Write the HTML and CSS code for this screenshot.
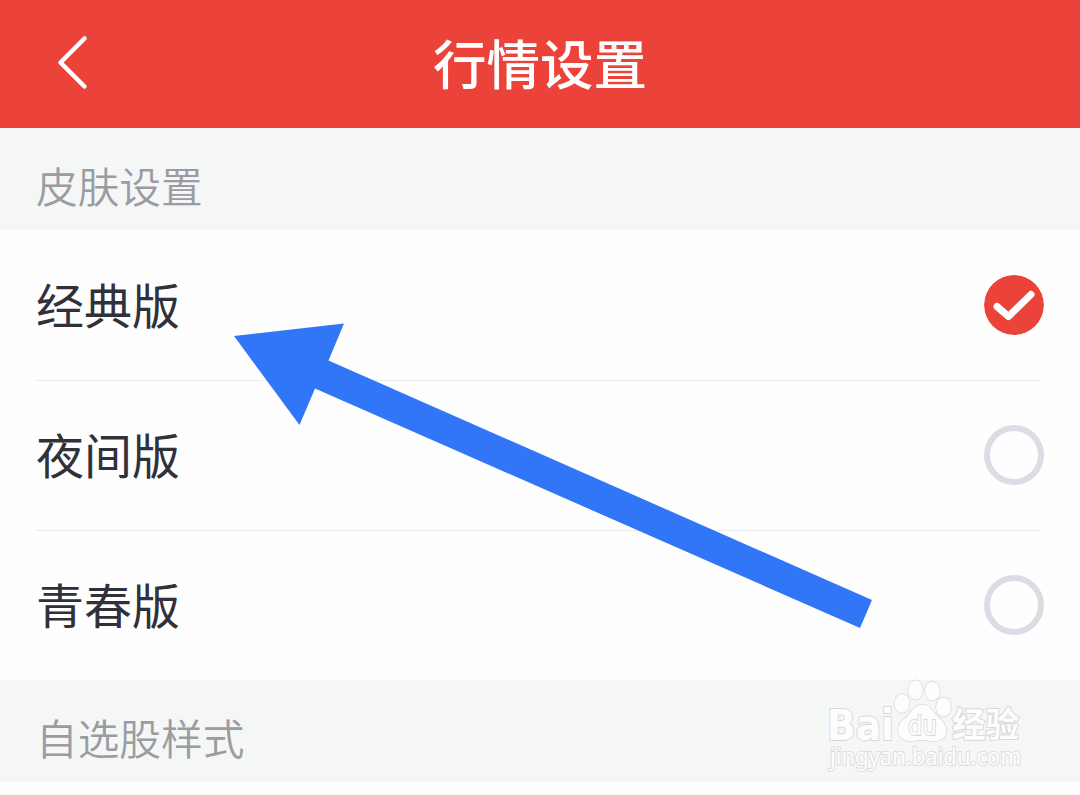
FILE: index.html
```html
<!DOCTYPE html>
<html lang="zh-CN">
<head>
  <meta charset="UTF-8">
  <meta name="viewport" content="width=device-width, initial-scale=1.0">
  <title>行情设置</title>
  <link rel="stylesheet" href="styles.css">
</head>
<body>

  <header class="navbar">
    <svg class="back" width="40" height="60" viewBox="0 0 40 60">
      <path d="M32.500 6.500 8.500 30.500 32.500 54.500"/>
    </svg>
    <h1>行情设置</h1>
  </header>

  <h2 class="section-title">皮肤设置</h2>
  <ul class="options">
    <li>
      <span>经典版</span>
      <svg class="radio checked" width="60" height="60" viewBox="0 0 60 60">
        <circle cx="30" cy="30" r="30"/>
        <path d="M13 31.500 24.500 41.500 47 19.500"/>
      </svg>
    </li>
    <li>
      <span>夜间版</span>
      <i class="radio"></i>
    </li>
    <li>
      <span>青春版</span>
      <i class="radio"></i>
    </li>
  </ul>
  <h2 class="section-title">自选股样式</h2>

  <!-- arrow pointing at the classic skin -->
  <svg class="arrow" width="640" height="306" viewBox="233 323 640 306">
    <polygon points="234,336 344,323.500 328.500,360.500 872,600 860,628 315,388.500 299.500,425"/>
  </svg>

  <svg class="watermark" width="210" height="100" viewBox="820 675 210 100">
    <text class="brand" x="827" y="740" textLength="67" lengthAdjust="spacingAndGlyphs">Bai</text>
    <g class="paw">
      <ellipse cx="902" cy="703.500" rx="7.500" ry="9.500"/>
      <ellipse cx="915.500" cy="690" rx="7.200" ry="9.800"/>
      <ellipse cx="932.500" cy="691" rx="7.500" ry="9.500"/>
      <ellipse cx="943.500" cy="707" rx="7.500" ry="9.500"/>
      <path d="M922 704.500C931 704.500 934 714 940 719C950 727 948 740 936 741C929 741.500 928 740 922 740C916 740 915 741.500 909 741C897 740 894 727 904 719C911 714 913 704.500 922 704.500Z"/>
    </g>
    <text class="du" x="908" y="735" textLength="29" lengthAdjust="spacingAndGlyphs">du</text>
    <text class="cn" x="952" y="737" textLength="67" lengthAdjust="spacingAndGlyphs">经验</text>
    <text class="url" x="830" y="765" textLength="191" lengthAdjust="spacingAndGlyphs">jingyan.baidu.com</text>
  </svg>

</body>
</html>
```

FILE: styles.css
```css
* {
  box-sizing: border-box;
  margin: 0;
  padding: 0;
}
body {
  font-family: "Noto Sans CJK SC", sans-serif;
  background: #fefefe;
  color: #303139;
  position: relative;
  height: 795px;
  overflow: hidden;
}
.navbar {
  display: grid;
  grid-template-columns: 100px 1fr 100px;
  align-items: center;
  height: 128px;
  padding-bottom: 4px;
  background: #eb433a;
  color: #fff;
}
.navbar h1 {
  grid-column: 2;
  font-size: 53.5px;
  font-weight: 500;
  line-height: 80px;
  text-align: center;
}
.back {
  margin-left: 52px;
}
.back path {
  fill: none;
  stroke: #fff;
  stroke-width: 4.5;
  stroke-linecap: round;
  stroke-linejoin: round;
}
.section-title {
  height: 102px;
  padding: 15px 36px 0;
  background: #f5f6f6;
  color: #9b9ca2;
  font-size: 41.7px;
  font-weight: 350;
  line-height: 84px;
}
.options {
  list-style: none;
  padding: 0 36px;
}
.options li {
  display: flex;
  align-items: center;
  justify-content: space-between;
  height: 150px;
  font-size: 48px;
  line-height: 70px;
}
.options li + li {
  background: linear-gradient(#ebebed, #ebebed) left top / 1004px 1px no-repeat;
}
.options span {
  padding-bottom: 5px;
}
.radio {
  width: 60px;
  height: 60px;
  border: 6.5px solid #dcdde4;
  border-radius: 50%;
}
.radio.checked {
  border: none;
}
.checked circle {
  fill: #eb433a;
}
.checked path {
  fill: none;
  stroke: #fff;
  stroke-width: 7;
  stroke-linecap: round;
  stroke-linejoin: round;
}
.arrow {
  position: absolute;
  left: 233px;
  top: 323px;
  fill: #3076f6;
}
.watermark {
  position: absolute;
  left: 820px;
  top: 675px;
  fill: #fdfdfd;
  stroke: #d8d8d8;
  stroke-width: 2;
  paint-order: stroke;
  font-family: "DejaVu Sans", sans-serif;
}
.brand {
  font-size: 43px;
  font-weight: 700;
}
.paw {
  stroke-width: 1.4;
}
.du {
  font-size: 27px;
}
.cn {
  font-family: "Noto Sans CJK SC", sans-serif;
  font-size: 34px;
  font-weight: 700;
}
.url {
  font-family: "Noto Sans", sans-serif;
  font-size: 23px;
  stroke: #dedede;
}
```
